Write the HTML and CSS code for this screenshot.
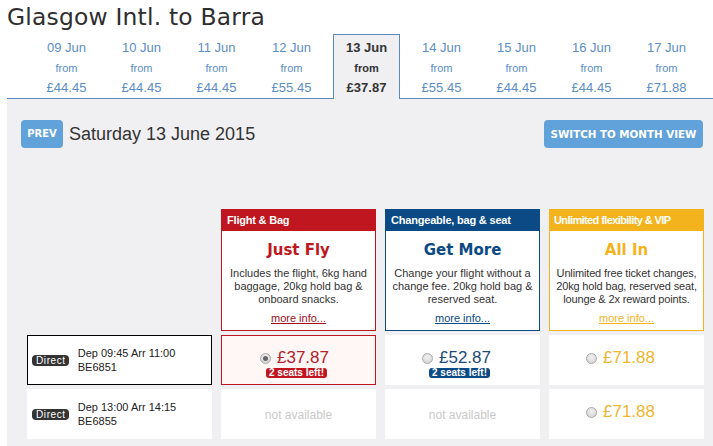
FILE: index.html
```html
<!DOCTYPE html>
<html>
<head>
<meta charset="utf-8">
<link rel="stylesheet" href="styles.css">
</head>
<body>
<div class="page">
  <h1 class="title">Glasgow Intl. to Barra</h1>
  <div class="tabs">
    <div class="tab"><span class="d">09 Jun</span><span class="f">from</span><span class="p">£44.45</span></div>
    <div class="tab"><span class="d">10 Jun</span><span class="f">from</span><span class="p">£44.45</span></div>
    <div class="tab"><span class="d">11 Jun</span><span class="f">from</span><span class="p">£44.45</span></div>
    <div class="tab"><span class="d">12 Jun</span><span class="f">from</span><span class="p">£55.45</span></div>
    <div class="tab sel"><span class="d">13 Jun</span><span class="f">from</span><span class="p">£37.87</span></div>
    <div class="tab"><span class="d">14 Jun</span><span class="f">from</span><span class="p">£55.45</span></div>
    <div class="tab"><span class="d">15 Jun</span><span class="f">from</span><span class="p">£44.45</span></div>
    <div class="tab"><span class="d">16 Jun</span><span class="f">from</span><span class="p">£44.45</span></div>
    <div class="tab"><span class="d">17 Jun</span><span class="f">from</span><span class="p">£71.88</span></div>
  </div>
  <div class="panel">
    <div class="toolbar">
      <span class="btn prev">PREV</span>
      <span class="day">Saturday 13 June 2015</span>
      <span class="btn month">SWITCH TO MONTH VIEW</span>
    </div>
    <div class="grid">
      <div class="blank"></div>
      <div class="card red">
        <div class="chead">Flight &amp; Bag</div>
        <div class="cbody">
          <div class="cname">Just Fly</div>
          <div class="cdesc">Includes the flight, 6kg hand baggage, 20kg hold bag &amp; onboard snacks.</div>
          <a class="more">more info...</a>
        </div>
      </div>
      <div class="card blue">
        <div class="chead">Changeable, bag &amp; seat</div>
        <div class="cbody">
          <div class="cname">Get More</div>
          <div class="cdesc">Change your flight without a change fee. 20kg hold bag &amp; reserved seat.</div>
          <a class="more">more info...</a>
        </div>
      </div>
      <div class="card gold">
        <div class="chead tight">Unlimited flexibility &amp; VIP</div>
        <div class="cbody">
          <div class="cname">All In</div>
          <div class="cdesc">Unlimited free ticket changes, 20kg hold bag, reserved seat, lounge &amp; 2x reward points.</div>
          <a class="more">more info...</a>
        </div>
      </div>

      <div class="flight active">
        <span class="direct">Direct</span>
        <div class="times">Dep 09:45 Arr 11:00<br>BE6851</div>
      </div>
      <div class="cell red picked">
        <div class="pick"><span class="radio on"></span><span class="price">£37.87</span></div>
        <span class="seats">2 seats left!</span>
      </div>
      <div class="cell blue">
        <div class="pick"><span class="radio"></span><span class="price">£52.87</span></div>
        <span class="seats">2 seats left!</span>
      </div>
      <div class="cell gold">
        <div class="pick"><span class="radio"></span><span class="price">£71.88</span></div>
      </div>

      <div class="flight">
        <span class="direct">Direct</span>
        <div class="times">Dep 13:00 Arr 14:15<br>BE6855</div>
      </div>
      <div class="cell na">not available</div>
      <div class="cell na">not available</div>
      <div class="cell gold">
        <div class="pick"><span class="radio"></span><span class="price">£71.88</span></div>
      </div>
    </div>
  </div>
</div>
</body>
</html>
```
FILE: styles.css
```css
* { box-sizing: border-box; }
html, body { margin: 0; padding: 0; background: #fff; }
body { font-family: "Liberation Sans", Arial, sans-serif; color: #333; }
.page { padding-left: 7px; width: 713px; height: 446px; overflow: hidden; }

.title {
  margin: 0;
  height: 34px;
  line-height: 34px;
  font-family: "DejaVu Sans", sans-serif;
  font-weight: normal;
  font-size: 23.4px;
  letter-spacing: 0.2px;
  color: #2e2e2e;
  white-space: nowrap;
}

.tabs {
  display: flex;
  gap: 8px;
  height: 65px;
  padding-left: 26px;
  border-bottom: 1px solid #5a8bbd;
}
.tab {
  width: 67px;
  height: 64px;
  padding-top: 4px;
  display: flex;
  flex-direction: column;
  align-items: center;
  color: #5b8ec6;
}
.tab .d, .tab .p { font-size: 13px; line-height: 20px; }
.tab .f { font-size: 11px; line-height: 20px; }
.tab.sel {
  height: 65px;
  border: 1px solid #5a8bbd;
  border-bottom: none;
  background: #f0f0f2;
  color: #333;
  font-weight: bold;
  padding-top: 3px;
}

.panel {
  background: #f0f0f2;
  height: 400px;
  padding: 21px 10px 0 14px;
}
.toolbar {
  display: flex;
  align-items: center;
  height: 28px;
  margin-bottom: 61px;
}
.btn {
  height: 28px;
  line-height: 28px;
  background: #61a2da;
  color: #fff;
  border-radius: 4px;
  font-family: "DejaVu Sans", sans-serif;
  font-weight: bold;
  font-size: 10px;
  text-align: center;
}
.prev { width: 42px; }
.month { width: 159px; margin-left: auto; font-size: 10.3px; letter-spacing: 0; }
.day { font-size: 18px; margin-left: 6px; color: #333; }

.grid {
  margin-left: 6px;
  display: grid;
  grid-template-columns: 185px 155px 155px 155px;
  column-gap: 9px;
  row-gap: 4px;
}
.red { --c: #c0161f; }
.blue { --c: #0b4a85; }
.gold { --c: #f2b31d; }

.card { display: flex; flex-direction: column; }
.chead {
  height: 22px;
  line-height: 22px;
  background: var(--c);
  color: #fff;
  font-weight: bold;
  font-size: 11px;
  padding-left: 6px;
  letter-spacing: -0.2px;
  white-space: nowrap;
}
.chead.tight { letter-spacing: -0.6px; padding-left: 5px; }
.cbody {
  height: 100px;
  border: 1px solid var(--c);
  border-top: none;
  background: #fff;
  text-align: center;
  padding: 9px 1px 0;
}
.cname {
  font-family: "DejaVu Sans", sans-serif;
  font-weight: bold;
  font-size: 15px;
  line-height: 20px;
  color: var(--c);
}
.cdesc {
  margin-top: 7px;
  font-size: 11px;
  line-height: 13px;
  color: #333;
}
.gold .cdesc { letter-spacing: -0.15px; }
.more {
  display: block;
  margin-top: 6px;
  font-size: 11px;
  line-height: 13px;
  color: var(--c);
  text-decoration: underline;
}
.blue .more { color: #0b4a85; }
.red .more { color: #a0101a; }

.flight {
  height: 50px;
  background: #fff;
  display: flex;
  align-items: center;
  padding-left: 5px;
}
.flight.active { border: 1px solid #000; padding-left: 4px; height: 50px; }
.direct {
  background: #333;
  color: #fff;
  font-size: 10px;
  letter-spacing: 0.6px;
  height: 11px;
  line-height: 11px;
  padding: 0 3px 0 4px;
  border-radius: 4px;
  margin-top: 1px;
}
.times {
  margin-left: 9px;
  font-size: 11px;
  line-height: 14px;
  color: #222;
}

.cell {
  height: 50px;
  background: #fff;
  display: flex;
  flex-direction: column;
  align-items: center;
  justify-content: flex-start;
  padding-top: 13px;
}
.cell.picked { border: 1px solid var(--c); background: #fff6f6; padding-top: 12px; }
.pick { display: flex; align-items: center; height: 20px; margin-right: 12px; }
.red .pick { margin-right: 8px; }
.radio {
  width: 11px;
  height: 11px;
  border-radius: 50%;
  border: 1px solid #a9a9a9;
  background: radial-gradient(circle at 50% 35%, #f2f2f2, #cfcfcf);
  margin-right: 6px;
  position: relative;
}
.radio.on::after {
  content: "";
  position: absolute;
  left: 2px; top: 2px;
  width: 5px; height: 5px;
  border-radius: 50%;
  background: #666;
}
.price { font-size: 17px; color: var(--c); }
.gold .price { color: #f0b531; }
.blue .price { color: #1d4a7a; }
.red .price { color: #b3222b; }
.seats {
  background: var(--c);
  color: #fff;
  font-weight: bold;
  font-size: 10px;
  line-height: 10px;
  height: 10px;
  padding: 0 3px;
  border-radius: 3px;
  margin-right: 6px;
}
.red .seats { margin-right: 4px; }
.na { color: #c9c9c9; font-size: 12px; justify-content: center; padding-top: 2px; }
```
